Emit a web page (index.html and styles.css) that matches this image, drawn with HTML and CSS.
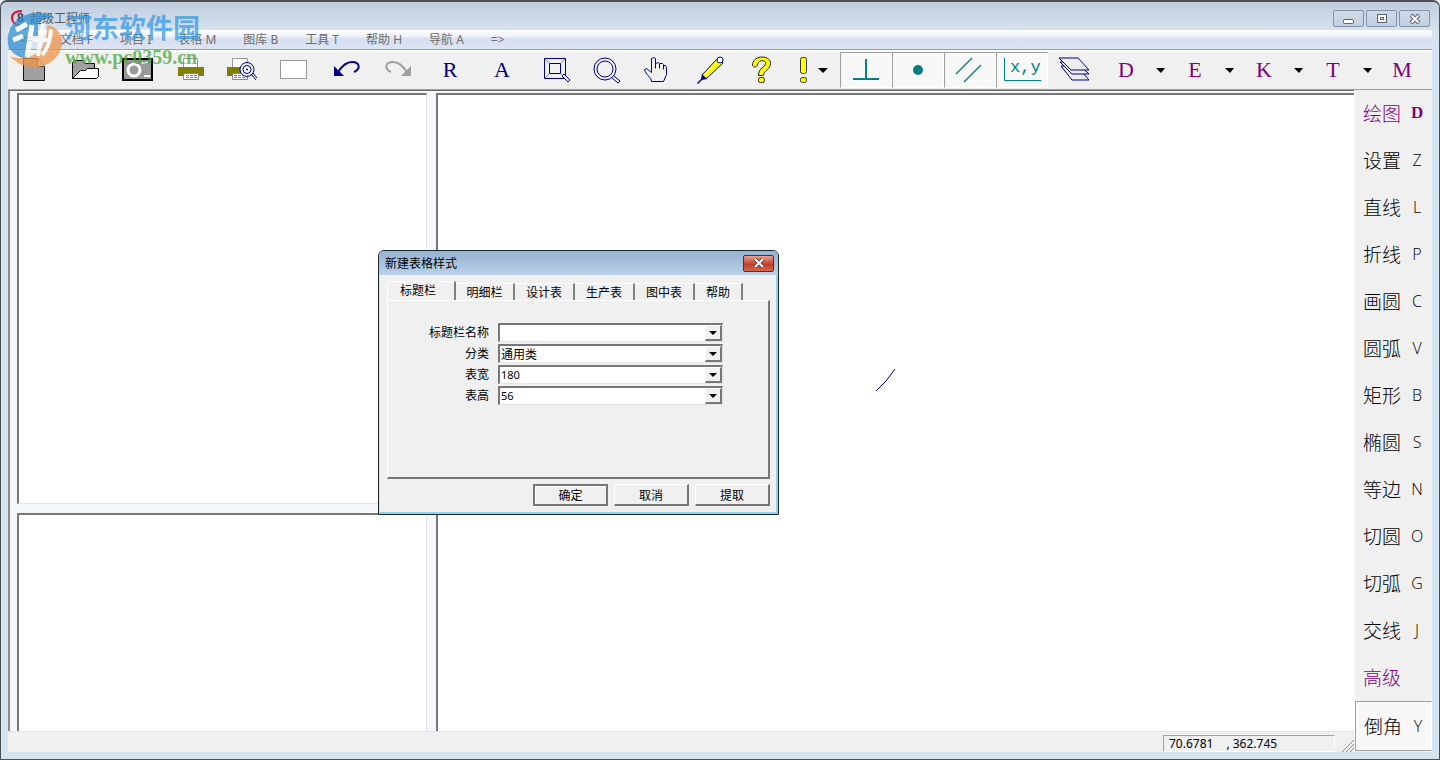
FILE: index.html
```html
<!DOCTYPE html>
<html lang="zh-CN">
<head>
<meta charset="utf-8">
<title>超级工程师</title>
<link rel="stylesheet" href="styles.css">
</head>
<body>
<div class="window">
  <header class="titlebar">
    <svg class="app-icon" width="16" height="16" viewBox="0 0 16 16"><path d="M11 1C4 1 1 4 1 8s3 7 8 7" fill="none" stroke="#d8102c" stroke-width="2"/><text x="6" y="12" class="app-glyph">8</text></svg>
    <h1 class="app-title">超级工程师</h1>
    <div class="caption-buttons">
      <button class="caption" aria-label="最小化"><svg width="12" height="12" viewBox="0 0 12 12"><rect x="0.500" y="6.500" width="10" height="4" rx="1" fill="#fff" stroke="#596273"/></svg></button>
      <button class="caption" aria-label="最大化"><svg width="12" height="12" viewBox="0 0 12 12"><rect x="1.500" y="1.500" width="9" height="8" fill="#fff" stroke="#596273"/><rect x="4.500" y="4.500" width="3" height="2" fill="#fff" stroke="#596273"/></svg></button>
      <button class="caption" aria-label="关闭"><svg width="12" height="12" viewBox="0 0 12 12"><path d="M2 2l8 8M10 2l-8 8" stroke="#596273" stroke-width="4"/><path d="M2.500 2.500l7 7M9.500 2.500l-7 7" stroke="#fff" stroke-width="2"/></svg></button>
    </div>
  </header>
  <nav class="menubar">
    <button class="menu">&lt;=</button>
    <button class="menu">文档 F</button>
    <button class="menu">项目 I</button>
    <button class="menu">表格 M</button>
    <button class="menu">图库 B</button>
    <button class="menu">工具 T</button>
    <button class="menu">帮助 H</button>
    <button class="menu">导航 A</button>
    <button class="menu">=&gt;</button>
  </nav>
  <div class="toolbar" role="toolbar">
    <button class="tool" aria-label="新建"><svg width="32" height="32" viewBox="0 0 32 32"><path d="M5.500 4.500h14l7 8v14h-21z" fill="#a0a0a0" stroke="#111"/><path d="M19.500 4.500v8h7" fill="#eee" stroke="#555"/></svg></button>
    <button class="tool" aria-label="打开"><svg width="32" height="32" viewBox="0 0 32 32"><path d="M2.500 24.500v-16l2-2h8l3 3h9v5" fill="#a0a0a0" stroke="#000"/><path d="M2.500 24.500l8-8h5l2-2h11v8l-2 2z" fill="#fff" stroke="#000"/></svg></button>
    <button class="tool" aria-label="保存"><svg width="32" height="32" viewBox="0 0 32 32"><rect x="1" y="5" width="29" height="21" fill="#999" stroke="#000" stroke-width="2"/><circle cx="12" cy="16" r="6" fill="#999" stroke="#fff" stroke-width="3"/><path d="M20 9h6M22 22h6" stroke="#fff" stroke-width="2"/></svg></button>
    <button class="tool" aria-label="打印"><svg width="32" height="32" viewBox="0 0 32 32"><path d="M9.500 4.500h14v9h-14z" fill="#fff" stroke="#999"/><rect x="4" y="13" width="26" height="9" fill="#808000"/><path d="M9.500 19.500h15v6h-15z" fill="#fff" stroke="#888"/><path d="M12 21.500h11M12 23.500h11" stroke="#888" stroke-dasharray="3 1"/></svg></button>
    <button class="tool" aria-label="打印预览"><svg width="32" height="32" viewBox="0 0 32 32"><path d="M6.500 4.500h15v9h-15z" fill="#fff" stroke="#999"/><rect x="1" y="13" width="24" height="9" fill="#808000"/><path d="M6.500 19.500h15v6h-15z" fill="#fff" stroke="#888"/><path d="M8 21.500h11M8 23.500h11" stroke="#888" stroke-dasharray="3 1"/><circle cx="21" cy="15.500" r="7" fill="#eee" stroke="#000080"/><circle cx="21" cy="15.500" r="4" fill="#fff" stroke="#000080"/><circle cx="21" cy="15.500" r="1" fill="#000080"/><path d="M25 20l5 6M27 19l4 5" stroke="#000080"/></svg></button>
    <button class="tool" aria-label="空白"><svg width="32" height="32" viewBox="0 0 32 32"><rect x="2.500" y="6.500" width="26" height="18" fill="#fff" stroke="#999"/></svg></button>
    <button class="tool" aria-label="撤销"><svg width="32" height="32" viewBox="0 0 32 32"><path d="M4 12v10h10z" fill="#000080"/><path d="M8 18c4-6 9-10 14-10 8 0 9 7 2 10" fill="none" stroke="#000080" stroke-width="2"/></svg></button>
    <button class="tool" aria-label="重做"><svg width="32" height="32" viewBox="0 0 32 32"><path d="M29 12v10H19z" fill="#a0a0a0"/><path d="M25 18C21 12 16 8 11 8c-8 0-9 7-2 10" fill="none" stroke="#a0a0a0" stroke-width="2"/></svg></button>
    <button class="tool letter navy">R</button>
    <button class="tool letter navy">A</button>
    <button class="tool" aria-label="窗口缩放"><svg width="32" height="32" viewBox="0 0 32 32" fill="none" stroke="#000080"><path d="M6.500 4.500h21v20h-21zM11.500 9.500h11v10h-11z"/><path d="M7 5l4 4M27 5l-4 4M7 24l4-4M23 20l4 4" stroke="#8080c0"/><path d="M24 22l6 6 2-2-6-6z" fill="#eee"/></svg></button>
    <button class="tool" aria-label="缩放"><svg width="32" height="32" viewBox="0 0 32 32" fill="none" stroke="#000080"><circle cx="15" cy="15" r="11"/><circle cx="15" cy="15" r="8"/><path d="M22 24l6 5 2-2-6-5"/></svg></button>
    <button class="tool" aria-label="平移"><svg width="32" height="32" viewBox="0 0 32 32" fill="none" stroke="#000080"><path d="M9.500 27.500c0-4-6-7-7-12l2-1 5 4V4.500l2-1 2 1v10M13.500 9.500l3-1 1 1v5M17.500 9.500l3 0 1 1v5M21.500 11.500l2 0 1 2v7l-3 7h-12"/></svg></button>
    <button class="tool" aria-label="画笔"><svg width="32" height="32" viewBox="0 0 32 32"><path d="M8 21L24 4l5 5-17 16z" fill="#ff0" stroke="#000080"/><path d="M8 20l5 5-5 1-4 4-1-1 4-4z" fill="#000080"/><circle cx="26" cy="6" r="3" fill="#fff" stroke="#000080"/></svg></button>
    <button class="tool" aria-label="帮助"><svg width="32" height="32" viewBox="0 0 32 32"><path d="M6.500 11.500c0-11 18-11 18-2 0 6-7 7-7 12h-5c0-8 7-8 7-12 0-4-8-4-8 2-2 2-4 2-5 0z" fill="#ff0" stroke="#222"/><rect x="12.500" y="23.500" width="6" height="5" rx="2" fill="#ff0" stroke="#222"/></svg></button>
    <button class="tool alert" aria-label="提示"><svg width="12" height="32" viewBox="0 0 12 32"><rect x="3.500" y="3.500" width="6" height="16" rx="2" fill="#ff0" stroke="#333"/><rect x="3.500" y="23.500" width="6" height="5" rx="2" fill="#ff0" stroke="#333"/></svg><svg width="10" height="5" viewBox="0 0 10 5"><path d="M0 0h10l-5 5z"/></svg></button>
    <button class="tool on" aria-label="垂足"><svg width="32" height="32" viewBox="0 0 32 32"><path d="M16 5v19M3 25h26" stroke="#008080" stroke-width="2"/></svg></button>
    <button class="tool on" aria-label="点"><svg width="32" height="32" viewBox="0 0 32 32"><circle cx="16" cy="16" r="5" fill="#008080"/></svg></button>
    <button class="tool on" aria-label="平行"><svg width="32" height="32" viewBox="0 0 32 32"><path d="M2 20L18 4M10 28l17-17" stroke="#008080" stroke-width="1.400"/></svg></button>
    <button class="tool on" aria-label="坐标"><svg width="42" height="32" viewBox="0 0 42 32"><path d="M3.500 4v22.500H40" fill="none" stroke="#008080"/><text x="9" y="18" class="xy">x,y</text></svg></button>
    <button class="tool" aria-label="图层"><svg width="34" height="32" viewBox="0 0 34 32"><g fill="#eee" stroke="#000080"><path d="M4 12h16l12 14H15z"/><path d="M3 8h16l13 12H15z"/><path d="M2 4h19l11 12H14z"/></g></svg></button>
    <button class="tool letter purple">D</button><button class="drop" aria-label="D 菜单"><svg width="9" height="5" viewBox="0 0 9 5"><path d="M0 0h9L5 5z"/></svg></button>
    <button class="tool letter purple">E</button><button class="drop" aria-label="E 菜单"><svg width="9" height="5" viewBox="0 0 9 5"><path d="M0 0h9L5 5z"/></svg></button>
    <button class="tool letter purple">K</button><button class="drop" aria-label="K 菜单"><svg width="9" height="5" viewBox="0 0 9 5"><path d="M0 0h9L5 5z"/></svg></button>
    <button class="tool letter purple">T</button><button class="drop" aria-label="T 菜单"><svg width="9" height="5" viewBox="0 0 9 5"><path d="M0 0h9L5 5z"/></svg></button>
    <button class="tool letter purple">M</button>
  </div>
  <div class="body">
    <main class="workspace">
      <div class="side-panes">
        <section class="pane pane-top"></section>
        <section class="pane pane-bottom"></section>
      </div>
      <section class="pane canvas">
        <svg class="stroke" width="22" height="24" viewBox="0 0 22 24"><path d="M1 23L11 13 20 1" fill="none" stroke="#000080"/></svg>
      </section>
    </main>
    <footer class="status">
      <output class="coords"><span>70.6781</span><span>, 362.745</span></output>
      <svg class="grip" width="12" height="12" viewBox="0 0 12 12"><path d="M0 12L12 0M4 12l8-8M8 12l4-4" stroke="#888"/></svg>
    </footer>
    <aside class="commands">
      <button class="cmd heading"><span>绘图</span><b>D</b></button>
      <button class="cmd"><span>设置</span><i>Z</i></button>
      <button class="cmd"><span>直线</span><i>L</i></button>
      <button class="cmd"><span>折线</span><i>P</i></button>
      <button class="cmd"><span>画圆</span><i>C</i></button>
      <button class="cmd"><span>圆弧</span><i>V</i></button>
      <button class="cmd"><span>矩形</span><i>B</i></button>
      <button class="cmd"><span>椭圆</span><i>S</i></button>
      <button class="cmd"><span>等边</span><i>N</i></button>
      <button class="cmd"><span>切圆</span><i>O</i></button>
      <button class="cmd"><span>切弧</span><i>G</i></button>
      <button class="cmd"><span>交线</span><i>J</i></button>
      <button class="cmd heading"><span>高级</span></button>
      <button class="cmd active"><span>倒角</span><i>Y</i></button>
    </aside>
  </div>

  <div class="dialog" role="dialog" aria-labelledby="dlg-title">
    <div class="dialog-title">
      <h2 id="dlg-title">新建表格样式</h2>
      <button class="dialog-close" aria-label="关闭"><svg width="12" height="10" viewBox="0 0 12 10"><path d="M2 1l8 8M10 1L2 9" stroke="#653a3a" stroke-width="4"/><path d="M2 1l8 8M10 1L2 9" stroke="#fff" stroke-width="2"/></svg></button>
    </div>
    <form class="dialog-body">
      <div class="tabs" role="tablist">
        <button type="button" role="tab" class="tab selected" aria-selected="true">标题栏</button>
        <button type="button" role="tab" class="tab second">明细栏</button>
        <button type="button" role="tab" class="tab">设计表</button>
        <button type="button" role="tab" class="tab">生产表</button>
        <button type="button" role="tab" class="tab">图中表</button>
        <button type="button" role="tab" class="tab short">帮助</button>
      </div>
      <div class="tab-panel">
        <label for="f-name">标题栏名称</label>
        <div class="combo"><input id="f-name" type="text"><button type="button" class="combo-drop" aria-label="展开"><svg width="8" height="4" viewBox="0 0 8 4"><path d="M0 0h8L4 4z"/></svg></button></div>
        <label for="f-type">分类</label>
        <div class="combo"><select id="f-type"><option>通用类</option></select><span class="combo-drop"><svg width="8" height="4" viewBox="0 0 8 4"><path d="M0 0h8L4 4z"/></svg></span></div>
        <label for="f-width">表宽</label>
        <div class="combo"><input id="f-width" type="text" value="180"><button type="button" class="combo-drop" aria-label="展开"><svg width="8" height="4" viewBox="0 0 8 4"><path d="M0 0h8L4 4z"/></svg></button></div>
        <label for="f-height">表高</label>
        <div class="combo"><input id="f-height" type="text" value="56"><button type="button" class="combo-drop" aria-label="展开"><svg width="8" height="4" viewBox="0 0 8 4"><path d="M0 0h8L4 4z"/></svg></button></div>
      </div>
      <div class="actions">
        <button type="button" class="push default">确定</button>
        <button type="button" class="push">取消</button>
        <button type="button" class="push">提取</button>
      </div>
    </form>
  </div>

  <div class="watermark">
    <svg width="58" height="60" viewBox="0 0 58 60"><path d="M4 39C-2 20 14 2 36 4c6 0 10 2 14 5-8-1-14 2-17 7v11h-8v13l-4 10C13 48 7 44 4 39z" fill="#2f8fd0"/><path d="M42 16c8 1 14 7 15 15 1 17-15 29-32 27-8-1-15-5-20-11 10 4 21 2 28-4 6-5 9-13 9-27z" fill="#f0954a"/><path d="M11 21l11-6M8 31l10-4M27 16l-5 32" fill="none" stroke="#fff" stroke-width="5"/><path d="M38 15l-5 32M46 20c-1 12-3 19-9 26M23 31h20" fill="none" stroke="#fff" stroke-width="4"/></svg>
    <div class="watermark-text"><span class="site">河东软件园</span><span class="url">www.pc0359.cn</span></div>
  </div>
</div>
</body>
</html>
```
FILE: styles.css
```css
* { box-sizing: border-box; }

body {
  margin: 0;
  background: #e8edf2;
  font: 12px/16px "Noto Sans", "Noto Sans CJK SC", sans-serif;
  color: #000;
}

button, input, select { font: inherit; color: inherit; }

button {
  margin: 0;
  padding: 0;
  border: 0;
  background: none;
}

h1, h2 { margin: 0; font: inherit; }

svg { display: block; }

.window {
  position: relative;
  display: flex;
  flex-direction: column;
  min-height: 100vh;
  padding: 0 7px 7px;
  border: 1px solid #4a4f58;
  border-top-width: 2px;
  border-radius: 7px 7px 0 0;
  background: #d6e5f2;
  background-image: linear-gradient(#c0cddd, #d6e2ee 28px, #d6e5f2 60px);
}

.titlebar {
  display: flex;
  align-items: center;
  height: 28px;
  padding-left: 3px;
  color: #555b64;
}

.app-icon { margin-top: 4px; }

.app-glyph { font: bold 12px "Liberation Sans", sans-serif; fill: #4b3550; }

.app-title { margin: 6px 0 0 3px; }

.caption-buttons { display: flex; gap: 2px; margin: 5px 2px 0 auto; }

.caption {
  display: grid;
  place-items: center;
  width: 31px;
  height: 17px;
  border: 1px solid #8392a8;
  border-radius: 2px;
  background: linear-gradient(#cfdae8, #c3d0e1);
}

.menubar {
  display: flex;
  gap: 27px;
  height: 20px;
  padding-left: 11px;
  border-bottom: 1px solid #a0a0a0;
  background: linear-gradient(#fdfeff, #eef0f8 7px, #d8dff0 8px, #dce3f3);
  color: #6d6d6d;
}

.toolbar {
  display: flex;
  align-items: stretch;
  height: 40px;
  padding-bottom: 1px;
  border-top: 2px solid #fff;
  border-bottom: 1px solid #a0a0a0;
  background: #f0f0f0;
}

.tool {
  display: grid;
  place-items: center;
  flex: none;
  width: 52px;
}

.tool.on {
  border: 1px solid #fff;
  border-top-color: #a0a0a0;
  border-left-color: #a0a0a0;
  background: #f8f8f8;
}

.tool.alert { display: flex; align-items: center; gap: 9px; padding-left: 9px; }

.letter { font: 22px/24px "Liberation Serif", serif; }
.navy { color: #000080; }
.purple { color: #800080; }
.xy { font: 17px "Liberation Mono", monospace; fill: #008080; }

.drop { display: grid; place-items: center; flex: none; width: 17px; }

.body {
  display: grid;
  flex: 1;
  grid-template: 1fr 21px / 1fr 78px;
  background: #f0f0f0;
}

.workspace {
  display: grid;
  grid-template-columns: 410px 1fr;
  gap: 9px;
  padding: 2px 0 0 7px;
  border-top: 1px solid #696969;
  border-left: 2px solid #8c8c8c;
  background: #f5f7fb;
}

.side-panes {
  display: grid;
  grid-template-rows: 410fr 218fr;
  gap: 9px;
}

.pane {
  border-top: 2px groove #a0a0a0;
  border-left: 2px groove #a0a0a0;
  border-top: 2px solid #777;
  border-left: 2px solid #777;
  background: #fff;
}

.side-panes .pane { border-right: 1px solid #e3e3e3; }
.pane-top { border-bottom: 1px solid #e3e3e3; }

.canvas { position: relative; }

.stroke { position: absolute; left: 437px; top: 273px; }

.status {
  display: flex;
  justify-content: flex-end;
  align-items: flex-end;
  gap: 7px;
  border-top: 1px solid #e3e3e3;
  background: #f0f0f0;
}

.coords {
  display: flex;
  gap: 13px;
  width: 172px;
  height: 17px;
  padding-left: 5px;
  border: 1px solid #fff;
  border-top-color: #a0a0a0;
  border-left-color: #a0a0a0;
}

.commands {
  grid-column: 2;
  grid-row: 1 / 3;
  display: flex;
  flex-direction: column;
  border-left: 1px solid #fff;
}

.cmd {
  display: flex;
  align-items: center;
  height: 47px;
  padding: 0 0 1px 8px;
  gap: 9px;
  font: 300 19px/24px "Noto Sans CJK SC", sans-serif;
}

.cmd i { width: 14px; font: 300 16px/24px "Open Sans", sans-serif; text-align: center; }
.cmd b { width: 14px; font: bold 17px/24px "Liberation Serif", serif; text-align: center; }

.heading { color: #800080; }

.active {
  height: 50px;
  border: 1px solid #a0a0a0;
  border-right-color: #fff;
  background: #f8f8f8;
}

.dialog {
  position: absolute;
  left: 377px;
  top: 248px;
  width: 401px;
  border: 1px solid #20262e;
  border-radius: 6px 6px 0 0;
  background: #f0f0f0;
  box-shadow: inset -2px -2px #8fd4ee, inset 1px 0 #cfe3f2;
  font-family: "Noto Sans CJK SC", sans-serif;
}

.dialog-title {
  display: flex;
  justify-content: space-between;
  align-items: center;
  height: 24px;
  padding: 0 4px 0 6px;
  border-radius: 5px 5px 0 0;
  background: linear-gradient(#96b2d2, #b9d1ea);
}

.dialog-close {
  display: grid;
  place-items: center;
  width: 31px;
  height: 17px;
  border: 1px solid #5c2a2a;
  border-radius: 2px;
  background: linear-gradient(#e5a191, #c84b35 50%, #bd3a22 51%, #d4694f);
}

.dialog-body { padding: 6px 8px 8px; }

.tabs { display: flex; align-items: flex-end; }

.tab {
  width: 60px;
  height: 17px;
  border-top: 1px solid #fff;
  border-right: 2px solid #808080;
  line-height: 16px;
}

.tab.selected {
  width: 69px;
  height: 19px;
  padding: 0 6px 3px 0;
  border-left: 1px solid #fff;
}

.tab.second { width: 59px; }
.tab.short { width: 48px; }

.tab-panel {
  display: grid;
  grid-template-columns: 101px 225px;
  grid-auto-rows: 19px;
  gap: 2px 9px;
  min-height: 179px;
  padding-top: 22px;
  border: 1px solid #fff;
  border-right: 2px solid #777;
  border-bottom: 2px solid #777;
}

.tab-panel label { text-align: right; line-height: 18px; }

.combo {
  position: relative;
  display: flex;
  border: 1px solid #e3e3e3;
  border-top: 2px solid #777;
  border-left: 2px solid #777;
  background: #fff;
}

.combo input, .combo select {
  flex: 1;
  min-width: 0;
  height: 16px;
  padding: 0 1px;
  border: 0;
  border-radius: 0;
  outline: 0;
  background: transparent;
  appearance: none;
  line-height: 16px;
}

.combo input { height: 15px; font: 11px/15px "Noto Sans", sans-serif; }

.combo-drop {
  display: grid;
  place-items: center;
  width: 17px;
  border: 1px solid #fff;
  border-right: 2px solid #777;
  border-bottom: 2px solid #777;
  background: #f0f0f0;
}

span.combo-drop { pointer-events: none; }

.actions { display: flex; justify-content: flex-end; gap: 6px; padding-top: 5px; }

.push {
  width: 75px;
  height: 22px;
  border: 1px solid #fff;
  border-right: 2px solid #777;
  border-bottom: 2px solid #777;
  background: #f0f0f0;
}

.push.default { border: 2px solid #777; box-shadow: inset 1px 1px #fff; }

.watermark {
  position: absolute;
  left: 4px;
  top: 7px;
  display: flex;
  gap: 2px;
  opacity: 0.75;
  pointer-events: none;
}

.watermark-text { display: flex; flex-direction: column; padding-top: 3px; }

.site { font: bold 27px/30px "Noto Sans CJK SC", sans-serif; color: #3a9be6; }
.url { font: bold 20px/30px "Liberation Serif", serif; color: #4aa83c; }
```
